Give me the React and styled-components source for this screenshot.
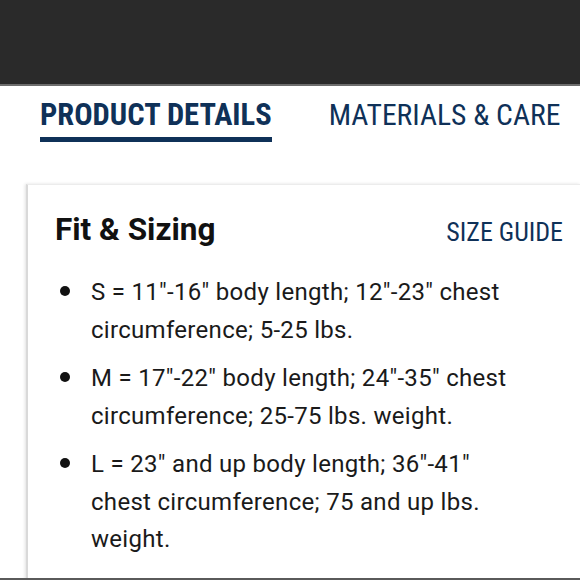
import React from "react";
import styled, { createGlobalStyle } from "styled-components";

const GlobalStyle = createGlobalStyle`
  html, body {
    margin: 0;
    padding: 0;
    background: #ffffff;
    overflow: hidden;
  }
  body {
    font-family: Roboto, "Liberation Sans", sans-serif;
  }
`;

const Screen = styled.div`
  width: 580px;
  height: 580px;
  display: flex;
  flex-direction: column;
  overflow: hidden;
`;

const TopBar = styled.div`
  height: 84px;
  flex-shrink: 0;
  background: #2a2a2a;
  border-bottom: 2px solid #6d6d6d;
`;

const Viewport = styled.div`
  flex: 1;
  overflow: hidden;
  border-bottom: 2px solid #5a5a5a;
`;

const Tabs = styled.div`
  display: flex;
  align-items: flex-start;
  gap: 57px;
  padding: 13px 0 0 40px;
`;

const Tab = styled.div`
  font-family: "Roboto Condensed", "Liberation Sans Narrow", Roboto, sans-serif;
  font-size: ${(p) => (p.$active ? "30.5px" : "29.6px")};
  font-weight: ${(p) => (p.$active ? 700 : 400)};
  color: #0f3158;
  line-height: 32px;
  padding-bottom: 6px;
  border-bottom: 5px solid ${(p) => (p.$active ? "#0f3158" : "transparent")};
`;

const Card = styled.section`
  margin: 42px 0 0 26px;
  background: #fff;
  border-top: 1px solid #ececec;
  border-left: 2px solid #d9d9d9;
  box-shadow: -1px 0 3px rgba(0, 0, 0, 0.12);
  padding: 27px 17px 0 27px;
`;

const CardHead = styled.div`
  display: flex;
  justify-content: space-between;
  align-items: baseline;
  line-height: 36px;
`;

const CardTitle = styled.h2`
  margin: 0;
  font-family: Roboto, "Liberation Sans", sans-serif;
  font-size: 31.5px;
  font-weight: 700;
  color: #111;
`;

const GuideLink = styled.a`
  font-family: "Roboto Condensed", "Liberation Sans Narrow", Roboto, sans-serif;
  font-size: 26px;
  color: #0f3158;
  text-decoration: none;
  position: relative;
  top: 1px;
`;

const List = styled.ul`
  list-style: none;
  margin: 25px 0 0 0;
  padding: 0;
`;

const Item = styled.li`
  position: relative;
  max-width: 430px;
  padding-left: 36px;
  font-size: 24px;
  letter-spacing: 0.3px;
  line-height: 37.5px;
  color: #1a1a1a;
  margin-bottom: 11px;

  &::before {
    content: "";
    position: absolute;
    left: 5px;
    top: 12px;
    width: 10px;
    height: 10px;
    border-radius: 50%;
    background: #111;
  }
`;

const sizes = [
  'S = 11"-16" body length; 12"-23" chest circumference; 5-25 lbs.',
  'M = 17"-22" body length; 24"-35" chest circumference; 25-75 lbs. weight.',
  'L = 23" and up body length; 36"-41" chest circumference; 75 and up lbs. weight.',
  "Cat sizes match the Ruffwear Hi & Light fit.",
];

export default function App() {
  return (
    <Screen>
      <GlobalStyle />
      <TopBar />
      <Viewport>
        <Tabs>
          <Tab $active>PRODUCT DETAILS</Tab>
          <Tab>MATERIALS &amp; CARE</Tab>
        </Tabs>
        <Card>
          <CardHead>
            <CardTitle>Fit &amp; Sizing</CardTitle>
            <GuideLink href="#">SIZE GUIDE</GuideLink>
          </CardHead>
          <List>
            {sizes.map((s) => (
              <Item key={s}>{s}</Item>
            ))}
          </List>
        </Card>
      </Viewport>
    </Screen>
  );
}
